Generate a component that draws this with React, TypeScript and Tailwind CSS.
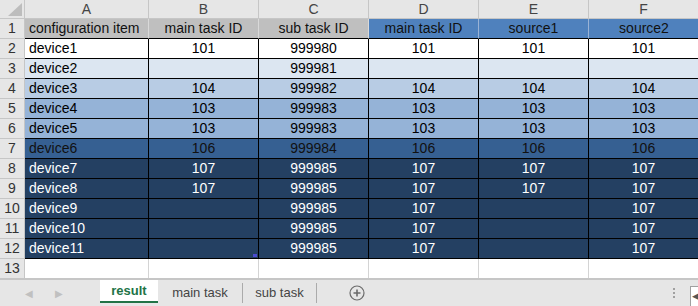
import React from "react";

type Row = {
  cells: string[];
  bg: string;
  text: string;
};

const widths = ["w-[124px]", "w-[110px]", "w-[110px]", "w-[110px]", "w-[110px]", "w-[110px]"];
const letters = ["A", "B", "C", "D", "E", "F"];

const rows: Row[] = [
  { cells: ["device1", "101", "999980", "101", "101", "101"], bg: "bg-white", text: "text-black" },
  { cells: ["device2", "", "999981", "", "", ""], bg: "bg-[#dce6f1]", text: "text-black" },
  { cells: ["device3", "104", "999982", "104", "104", "104"], bg: "bg-[#b8cce4]", text: "text-black" },
  { cells: ["device4", "103", "999983", "103", "103", "103"], bg: "bg-[#95b3d7]", text: "text-black" },
  { cells: ["device5", "103", "999983", "103", "103", "103"], bg: "bg-[#95b3d7]", text: "text-black" },
  { cells: ["device6", "106", "999984", "106", "106", "106"], bg: "bg-[#366092]", text: "text-[#111]" },
  { cells: ["device7", "107", "999985", "107", "107", "107"], bg: "bg-[#244062]", text: "text-white" },
  { cells: ["device8", "107", "999985", "107", "107", "107"], bg: "bg-[#244062]", text: "text-white" },
  { cells: ["device9", "", "999985", "107", "", "107"], bg: "bg-[#244062]", text: "text-white" },
  { cells: ["device10", "", "999985", "107", "", "107"], bg: "bg-[#244062]", text: "text-white" },
  { cells: ["device11", "", "999985", "107", "", "107"], bg: "bg-[#244062]", text: "text-white" },
];

const headers = ["configuration item", "main task ID", "sub task ID", "main task ID", "source1", "source2"];

const RowNum: React.FC<{ n: number }> = ({ n }) => (
  <div className="w-[25px] h-full shrink-0 bg-[#e6e6e6] border-r border-b border-[#c6c6c6] text-center text-[#333] leading-[19px]">
    {n}
  </div>
);

export default function App() {
  return (
    <div
      className="w-[698px] h-[306px] overflow-hidden bg-white text-[14px] whitespace-nowrap select-none"
      style={{ fontFamily: "'Liberation Sans', Arial, sans-serif" }}
    >
      {/* column letters */}
      <div className="flex h-[19px]">
        <div className="w-[25px] shrink-0 bg-[#e6e6e6] border-r border-b border-[#c6c6c6] relative">
          <svg className="absolute right-[2px] bottom-[2px]" width="14" height="13" viewBox="0 0 14 13">
            <polygon points="14,0 14,13 0,13" fill="#bdbdbd" />
          </svg>
        </div>
        {letters.map((l, i) => (
          <div
            key={l}
            className={`${widths[i]} shrink-0 bg-[#e6e6e6] border-r border-b border-[#c6c6c6] text-center text-[#444] leading-[18px]`}
          >
            {l}
          </div>
        ))}
      </div>

      {/* header row */}
      <div className="flex h-[20px]">
        <RowNum n={1} />
        {headers.map((h, i) => (
          <div
            key={i}
            className={`${widths[i]} shrink-0 overflow-hidden border-r border-b ${i === 5 ? "border-r-0" : ""} ${
              i < 3 ? "bg-[#bfbfbf] border-r-[#d9d9d9]" : "bg-[#4f81bd] border-r-[#9ab3d6]"
            } ${i === 2 ? "border-r-[#8a8a8a]" : ""} border-b-black text-[#111] leading-[19px] ${
              i === 0 ? "text-left pl-[4px]" : "text-center"
            }`}
          >
            {h}
          </div>
        ))}
      </div>

      {rows.map((r, ri) => (
        <div key={ri} className="flex h-[20px]">
          <RowNum n={ri + 2} />
          {r.cells.map((c, i) => (
            <div
              key={i}
              className={`${widths[i]} shrink-0 border-r border-b border-black ${r.bg} ${r.text} leading-[19px] relative ${
                i === 0 ? "text-left pl-[4px]" : "text-center"
              }`}
            >
              {c}
              {ri === 10 && i === 1 && (
                <span className="absolute right-[1px] bottom-[1px] w-[4px] h-[3px] bg-[#4b4bd0]" />
              )}
            </div>
          ))}
        </div>
      ))}

      {/* empty row 13 */}
      <div className="flex h-[19px]">
        <div className="w-[25px] h-full shrink-0 bg-[#e6e6e6] border-r border-[#c6c6c6] text-center text-[#333] leading-[19px]">
          13
        </div>
        {widths.map((w, i) => (
          <div key={i} className={`${w} shrink-0 border-r border-[#d4d4d4] bg-white`} />
        ))}
      </div>

      {/* sheet tab bar */}
      <div className="flex h-[28px] bg-[#e6e6e6] border-t-2 border-[#c6c6c6] items-stretch text-[13px]">
        <div className="w-[100px] shrink-0 flex items-center pl-[25px] gap-[22px] text-[#c0c0c0] text-[10px]">
          <span>◀</span>
          <span>▶</span>
        </div>
        <div className="w-[58px] shrink-0 bg-white flex items-center justify-center font-bold text-[#217346] border-b-2 border-[#217346] mb-[3px]">
          result
        </div>
        <div className="w-[84px] shrink-0 flex items-center justify-center text-[#444]">main task</div>
        <div className="w-px bg-[#ababab] my-[3px]" />
        <div className="w-[73px] shrink-0 flex items-center justify-center text-[#444]">sub task</div>
        <div className="w-px bg-[#ababab] my-[3px]" />
        <div className="w-[80px] shrink-0 flex items-center justify-center">
          <svg width="16" height="16" viewBox="0 0 16 16">
            <circle cx="8" cy="8" r="7" fill="none" stroke="#6b6b6b" strokeWidth="1.2" />
            <path d="M8 4.5v7M4.5 8h7" stroke="#6b6b6b" strokeWidth="1.6" />
          </svg>
        </div>
        <div className="flex-1" />
        <div className="w-[16px] flex flex-col items-center justify-center gap-[2px] mr-[8px]">
          <span className="w-[2px] h-[2px] bg-[#a0a0a0]" />
          <span className="w-[2px] h-[2px] bg-[#a0a0a0]" />
          <span className="w-[2px] h-[2px] bg-[#a0a0a0]" />
        </div>
        <div className="w-[8px] h-[20px] self-end border-l border-t border-[#a0a0a0] bg-white text-[9px] leading-[18px] pl-[1px] text-[#555] overflow-hidden">
          ◀
        </div>
      </div>
    </div>
  );
}
